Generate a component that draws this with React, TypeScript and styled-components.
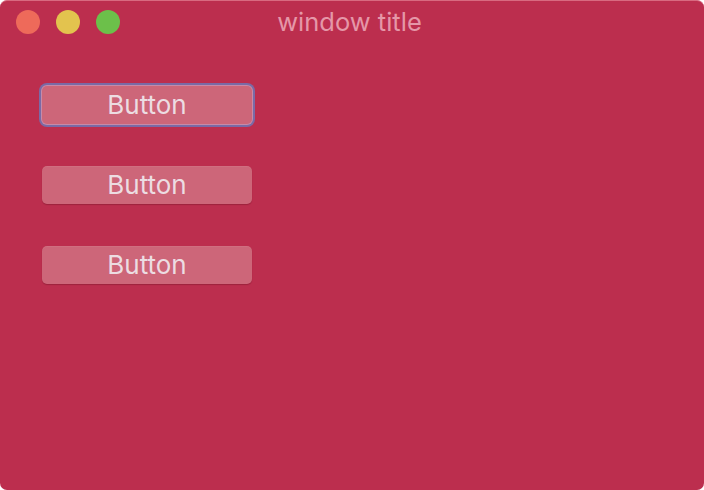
import React from "react";
import styled, { createGlobalStyle } from "styled-components";

const Global = createGlobalStyle`
  html, body { margin: 0; padding: 0; background: #ffffff; }
  #root { width: 704px; height: 490px; }
`;

const Window = styled.div`
  width: 704px;
  height: 490px;
  box-sizing: border-box;
  background: #bc2e4e;
  border-radius: 7px;
  border-top: 1px solid #d86a80;
  overflow: hidden;
  display: flex;
  flex-direction: column;
  font-family: Inter, "Noto Sans", sans-serif;
`;

const TitleBar = styled.div`
  position: relative;
  height: 43px;
  display: flex;
  align-items: center;
  justify-content: center;
`;

const Lights = styled.div`
  position: absolute;
  left: 16px;
  top: 9px;
  display: flex;
  gap: 16px;
`;

const Light = styled.div<{ $c: string }>`
  width: 24px;
  height: 24px;
  border-radius: 50%;
  background: ${(p) => p.$c};
`;

const Title = styled.div`
  color: #e597a8;
  font-size: 25.5px;
  margin-left: -5px;
  margin-top: -2px;
`;

const Content = styled.div`
  display: flex;
  flex-direction: column;
  align-items: flex-start;
  gap: 42px;
  padding: 42px 0 0 42px;
`;

const Button = styled.button<{ $focused?: boolean }>`
  width: 210px;
  height: 38px;
  box-sizing: border-box;
  border: none;
  border-radius: 5px;
  background: #cd6679;
  color: #ecdde2;
  font-family: Inter, "Noto Sans", sans-serif;
  font-size: 26px;
  padding: 0 0 1px 0;
  box-shadow: ${(p) =>
    p.$focused
      ? "0 0 0 1px #c78aa8, 0 0 0 3px #7a6aa6"
      : "0 1px 1px rgba(120, 20, 40, 0.45), inset 0 1px 0 rgba(255,255,255,0.06)"};
  outline: none;
`;

export default function App() {
  return (
    <>
      <Global />
      <Window>
        <TitleBar>
          <Lights>
            <Light $c="#ee6a5a" />
            <Light $c="#e3c34e" />
            <Light $c="#6cc04a" />
          </Lights>
          <Title>window title</Title>
        </TitleBar>
        <Content>
          <Button $focused>Button</Button>
          <Button>Button</Button>
          <Button>Button</Button>
        </Content>
      </Window>
    </>
  );
}
